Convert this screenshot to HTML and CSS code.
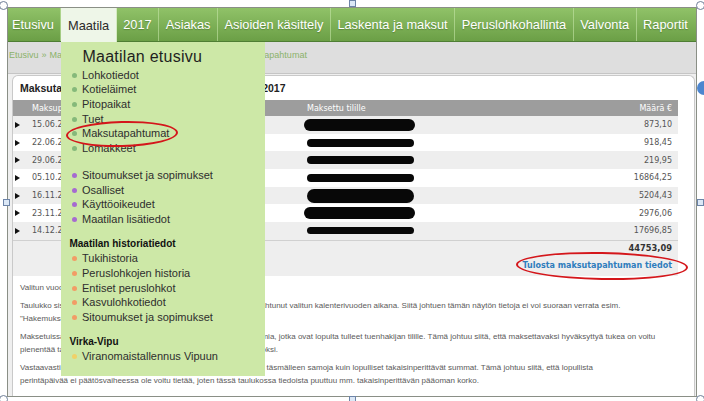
FILE: index.html
```html
<!DOCTYPE html>
<html lang="fi">
<head>
<meta charset="utf-8">
<title>Maksutapahtumat</title>
<link rel="stylesheet" href="styles.css">
</head>
<body>
<div class="frame">
  <nav class="topnav">
    <ul class="nav-list">
      <li class="nav-item"><a href="#">Etusivu</a></li>
      <li class="nav-item active"><a href="#">Maatila</a>
        <div class="dropdown">
          <div class="dd-title">Maatilan etusivu</div>
          <ul class="dd-list dot-green">
            <li>Lohkotiedot</li>
            <li>Kotieläimet</li>
            <li>Pitopaikat</li>
            <li>Tuet</li>
            <li>Maksutapahtumat</li>
            <li>Lomakkeet</li>
          </ul>
          <ul class="dd-list dot-purple gap">
            <li>Sitoumukset ja sopimukset</li>
            <li>Osalliset</li>
            <li>Käyttöoikeudet</li>
            <li>Maatilan lisätiedot</li>
          </ul>
          <div class="dd-heading">Maatilan historiatiedot</div>
          <ul class="dd-list dot-orange flush">
            <li>Tukihistoria</li>
            <li>Peruslohkojen historia</li>
            <li>Entiset peruslohkot</li>
            <li>Kasvulohkotiedot</li>
            <li>Sitoumukset ja sopimukset</li>
          </ul>
          <div class="dd-heading">Virka-Vipu</div>
          <ul class="dd-list dot-yellow flush">
            <li>Viranomaistallennus Vipuun</li>
          </ul>
          <span class="mark mark-menu"></span>
        </div>
      </li>
      <li class="nav-item"><a href="#">2017</a></li>
      <li class="nav-item"><a href="#">Asiakas</a></li>
      <li class="nav-item"><a href="#">Asioiden käsittely</a></li>
      <li class="nav-item"><a href="#">Laskenta ja maksut</a></li>
      <li class="nav-item"><a href="#">Peruslohkohallinta</a></li>
      <li class="nav-item"><a href="#">Valvonta</a></li>
      <li class="nav-item"><a href="#">Raportit</a></li>
    </ul>
  </nav>

  <div class="crumbs">
    <a href="#">Etusivu</a><span class="crumb-sep">»</span><a href="#">Maatila</a><span class="crumb-sep">»</span><a href="#">Maatilan etusivu</a><span class="crumb-sep">»</span><a href="#">Tuet ja maksut</a><span class="crumb-sep">»</span><span>Maksutapahtumat</span>
  </div>

  <main class="content">
    <div class="panel-title">Maksutapahtumat valitun kalenterivuoden ajalta 2017</div>
    <table class="pay">
      <colgroup>
        <col class="c-toggle"><col class="c-date"><col class="c-account"><col class="c-sum">
      </colgroup>
      <thead>
        <tr><th></th><th>Maksupäivä</th><th>Maksettu tilille</th><th class="sum">Määrä €</th></tr>
      </thead>
      <tbody>
        <tr><td><span class="toggle"></span></td><td>15.06.2017</td><td><span class="redact thick"></span></td><td class="sum">873,10</td></tr>
        <tr><td><span class="toggle"></span></td><td>22.06.2017</td><td><span class="redact"></span></td><td class="sum">918,45</td></tr>
        <tr><td><span class="toggle"></span></td><td>29.06.2017</td><td><span class="redact"></span></td><td class="sum">219,95</td></tr>
        <tr><td><span class="toggle"></span></td><td>05.10.2017</td><td><span class="redact"></span></td><td class="sum">16864,25</td></tr>
        <tr><td><span class="toggle"></span></td><td>16.11.2017</td><td><span class="redact xthick"></span></td><td class="sum">5204,43</td></tr>
        <tr><td><span class="toggle"></span></td><td>23.11.2017</td><td><span class="redact thick"></span></td><td class="sum">2976,06</td></tr>
        <tr><td><span class="toggle"></span></td><td>14.12.2017</td><td><span class="redact thin"></span></td><td class="sum">17696,85</td></tr>
      </tbody>
    </table>
    <div class="totals">
      <div class="total-sum">44753,09</div>
      <a class="print-link" href="#">Tulosta maksutapahtuman tiedot</a>
      <span class="mark mark-print"></span>
    </div>

    <div class="notes">
      <p>Valitun vuoden maksutapahtumat näytetään maksupäivän mukaan.</p>
      <p>Taulukko sisältää kaikki nuo maksutapahtumat, joiden maksu on tapahtunut valitun kalenterivuoden aikana. Siitä johtuen tämän näytön tietoja ei voi suoraan verrata esim.<br>"Hakemukset ja päätökset" -näytön tietoihin.</p>
      <p>Maksetuissa määrissä huomioidaan tässä yksinomaan sellaisia summia, jotka ovat lopulta tulleet tuenhakijan tilille. Tämä johtuu siitä, että maksettavaksi hyväksyttyä tukea on voitu<br>pienentää takaisinperintöjen, kuittausten sekä muiden vastaavien vuoksi.</p>
      <p>Vastaavasti takaisin perittäviksi merkityt summat eivät välttämättä ole täsmälleen samoja kuin lopulliset takaisinperittävät summat. Tämä johtuu siitä, että lopullista<br>perintäpäivää ei päätösvaiheessa ole voitu tietää, joten tässä taulukossa tiedoista puuttuu mm. takaisinperittävän pääoman korko.</p>
    </div>
  </main>
</div>

<span class="layout-btn"></span>
<span class="handle circle h-tl"></span>
<span class="handle square h-tm"></span>
<span class="handle circle h-tr"></span>
<span class="handle square h-ml"></span>
<span class="handle square h-mr"></span>
<span class="handle circle h-bl"></span>
<span class="handle square h-bm"></span>
<span class="handle circle h-br"></span>
</body>
</html>
```

FILE: styles.css
```css
* { box-sizing: border-box; }

html, body { margin: 0; padding: 0; }

body {
  position: relative;
  width: 704px;
  height: 401px;
  overflow: hidden;
  background: #fff;
  font-family: "Liberation Sans", Arial, Helvetica, sans-serif;
  color: #333;
}

a { text-decoration: none; color: inherit; }

.frame {
  position: relative;
  display: flex;
  flex-direction: column;
  margin: 7px 0 0 7px;
  width: 690px;
  height: 390px;
  border: 1px solid #8a8f86;
  background: #efefef;
  overflow: hidden;
}

/* ---------- top navigation ---------- */
.topnav {
  position: relative;
  z-index: 5;
  flex: none;
  height: 34px;
  background: linear-gradient(#90c268, #6b9f46);
  border-bottom: 1px solid #4f7e34;
}

.nav-list {
  display: flex;
  height: 100%;
  margin: 0;
  padding: 0;
  list-style: none;
}

.nav-item {
  position: relative;
  display: flex;
  align-items: center;
  padding: 0 6.5px;
  border-right: 1px solid rgba(196, 228, 166, 0.6);
  font-size: 12.8px;
  color: #fff;
  text-shadow: 0 1px 1px rgba(40, 70, 20, 0.35);
}

.nav-item:first-child { padding-left: 4px; }
.nav-item:last-child { border-right: 0; }

.nav-item.active {
  margin-bottom: -1px;
  background: #eef6e8;
  color: #2b2b2b;
  text-shadow: none;
}

/* ---------- dropdown ---------- */
.dropdown {
  position: absolute;
  top: 100%;
  left: 0;
  width: 204px;
  height: 334px;
  padding: 6px 0 0 8px;
  background: #cde8a7;
  color: #2e2e2e;
  text-shadow: none;
}

.dd-title {
  padding-left: 13px;
  font-size: 16px;
  letter-spacing: 0.25px;
  line-height: 18px;
  color: #1f1f1f;
}

.dd-list {
  list-style: none;
  margin: 1.5px 0 0;
  padding: 0;
  font-size: 11px;
  line-height: 14.7px;
}

.dd-list.gap { margin-top: 12.3px; }
.dd-list.flush { margin-top: 0; }

.dd-list li {
  position: relative;
  padding-left: 12.5px;
}

.dd-list li::before {
  content: "";
  position: absolute;
  left: 2.5px;
  top: 5px;
  width: 5px;
  height: 5px;
  border-radius: 50%;
  background: #85b97a;
}

.dot-purple li::before { background: #a66bd0; }
.dot-orange li::before { background: #f29c66; }
.dot-yellow li::before { background: #f0d168; }

.dd-heading {
  margin-top: 10.5px;
  font-size: 10px;
  font-weight: bold;
  line-height: 14px;
  color: #111;
}

/* red hand-drawn marks */
.mark {
  position: absolute;
  border: 2px solid #d4161b;
  border-radius: 50%;
  pointer-events: none;
}

.mark-menu {
  left: 5px;
  top: 79px;
  width: 112px;
  height: 26px;
  transform: rotate(-1.5deg);
}

.mark-print {
  left: 503px;
  top: 11px;
  width: 172px;
  height: 28px;
  transform: rotate(1deg);
}

/* ---------- breadcrumbs ---------- */
.crumbs {
  flex: none;
  height: 32px;
  padding: 7px 0 0 1px;
  background: #dedede;
  border-bottom: 1px solid #c5c5c5;
  font-size: 9px;
  line-height: 12px;
  color: #8bb26a;
  white-space: nowrap;
}

.crumb-sep { margin: 0 3px; }

/* ---------- content panel ---------- */
.content {
  flex: 1;
  margin: 1px 1px 0 4px;
  background: #fff;
  border: 1px solid #c9c9c9;
  border-bottom: 0;
  border-radius: 6px 6px 0 0;
  overflow: hidden;
}

.panel-title {
  display: flex;
  align-items: center;
  height: 24px;
  padding-left: 7px;
  font-size: 10.5px;
  font-weight: bold;
  color: #222;
  white-space: nowrap;
}

.pay {
  width: 665px;
  border-collapse: collapse;
  table-layout: fixed;
  font-family: "DejaVu Sans", Verdana, sans-serif;
}

.c-toggle { width: 19px; }
.c-date { width: 275px; }
.c-account { width: 293px; }
.c-sum { width: 78px; }

.pay th {
  height: 16px;
  padding: 0;
  background: #9d9d9d;
  color: #fff;
  font-size: 8px;
  font-weight: normal;
  text-align: left;
  white-space: nowrap;
}

.pay td {
  height: 17.7px;
  padding: 0;
  font-size: 8px;
  color: #555;
  white-space: nowrap;
  vertical-align: middle;
}

.pay tbody tr:nth-child(odd) td { background: #eeeeee; }

.pay .sum {
  padding-right: 6px;
  text-align: right;
}

.toggle {
  display: block;
  width: 0;
  height: 0;
  margin-left: 2px;
  border-left: 5px solid #111;
  border-top: 3.5px solid transparent;
  border-bottom: 3.5px solid transparent;
}

.redact {
  display: block;
  width: 107px;
  height: 8px;
  background: #080808;
  border-radius: 5px;
}

.redact.thick { height: 12px; width: 111px; margin-left: -3px; border-radius: 6px; }
.redact.xthick { height: 14px; border-radius: 7px; }
.redact.thin { height: 7px; }

.totals {
  position: relative;
  width: 665px;
  height: 36px;
  padding: 1px 6px 0 0;
  background: #eeeeee;
  border-top: 1px solid #d0d0d0;
  text-align: right;
  font-family: "DejaVu Sans", Verdana, sans-serif;
}

.total-sum {
  font-size: 8.3px;
  font-weight: bold;
  line-height: 12px;
  color: #333;
}

.print-link {
  display: block;
  margin-top: 6px;
  font-size: 8px;
  font-weight: bold;
  line-height: 12px;
  color: #2f7dbd;
}

.notes {
  padding: 6px 7px 0;
  font-size: 8px;
  line-height: 12.5px;
  color: #5a5a5a;
  white-space: nowrap;
}

.notes p { margin: 0 0 6px; }

/* ---------- picture selection handles ---------- */
.layout-btn {
  position: absolute;
  left: 697px;
  top: 81px;
  width: 14px;
  height: 14px;
  border-radius: 50%;
  background: #4d86cf;
}

.handle {
  position: absolute;
  z-index: 10;
}

.handle.circle {
  width: 9px;
  height: 9px;
  border: 1px solid #6f7f98;
  border-radius: 50%;
  background: #fff;
}

.handle.square {
  width: 7px;
  height: 7px;
  border: 1px solid #6d84a8;
  background: #dce8f6;
}

.h-tl { left: -1px; top: 1px; }
.h-tr { left: 696px; top: 1px; }
.h-bl { left: -1px; top: 395px; }
.h-br { left: 696px; top: 395px; }
.h-tm { left: 349px; top: 0; }
.h-bm { left: 349px; top: 396px; }
.h-ml { left: 3px; top: 199px; }
.h-mr { left: 697px; top: 199px; }
```
